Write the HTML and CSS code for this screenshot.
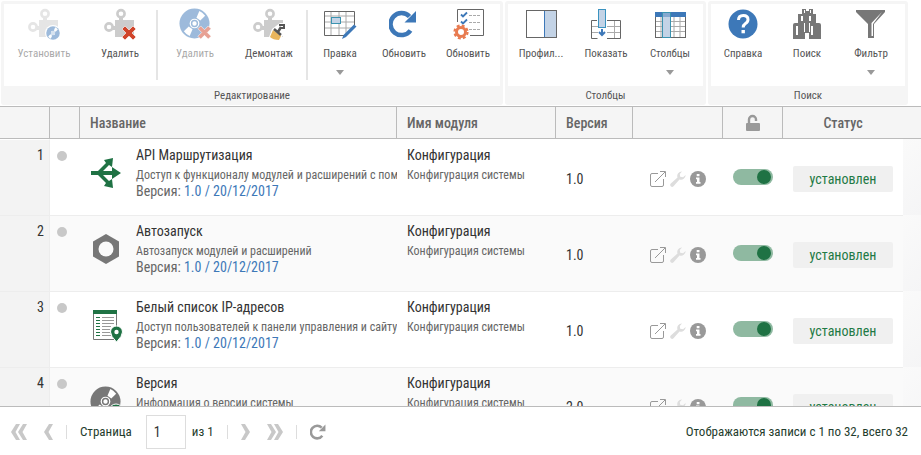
FILE: index.html
```html
<!DOCTYPE html>
<html lang="ru">
<head>
<meta charset="utf-8">
<title>Модули</title>
<link rel="stylesheet" href="styles.css">
</head>
<body>
<svg class="sprite" aria-hidden="true">
  <symbol id="puzzle" viewBox="0 0 32 32">
    <path d="M11 12h19v17H11v-7H8v-4h3z" fill="currentColor"/>
    <path d="M15 9h4v4h-4z" fill="currentColor"/>
    <circle cx="17" cy="5.700" r="3.600" fill="none" stroke="currentColor" stroke-width="2.600"/>
    <circle cx="5" cy="19" r="3.600" fill="none" stroke="currentColor" stroke-width="2.600"/>
  </symbol>
  <symbol id="cross" viewBox="0 0 16 16">
    <path d="M1 4l3-3 4 4 4-4 3 3-4 4 4 4-3 3-4-4-4 4-3-3 4-4z" fill="#d0452b" stroke="#fff" stroke-width=".6"/>
  </symbol>
  <symbol id="disc" viewBox="0 0 32 32">
    <circle cx="16" cy="16" r="15.500" fill="currentColor"/>
    <path d="M18 10l3-7q3 1 6 5l-5 5zM14 22l-3 7q-3-1-6-5l5-5z" fill="#fff"/>
    <circle cx="16" cy="16" r="5" fill="#fff"/>
    <circle cx="16" cy="16" r="3" fill="none" stroke="currentColor" stroke-width="1.500"/>
  </symbol>
  <symbol id="open" viewBox="0 0 16 16">
    <path d="M8 2.500H2Q.5 2.500.5 4v10q0 1.500 1.500 1.500h10q1.500 0 1.500-1.500V8M5 11L15 1M10 .5h5.500V6" fill="none" stroke="#999"/>
  </symbol>
  <symbol id="wrench" viewBox="0 0 16 16">
    <path d="M15.600 4A4.600 4.600 0 0 1 9.500 8.500L3.500 15.200A1.900 1.900 0 0 1 .8 12.500L7.500 6.500A4.600 4.600 0 0 1 12 .4L9.800 2.900l.4 2.900 2.900.4z" fill="#ddd"/>
  </symbol>
  <symbol id="info" viewBox="0 0 16 16">
    <circle cx="8" cy="8" r="8" fill="#999"/>
    <path d="M6.700 3h2.800v2.300H6.700zM6 6.500h3.500v4.500h1v1.800H6V11h1V8.200H6z" fill="#fff"/>
  </symbol>
  <symbol id="reload" viewBox="0 0 28 28">
    <path d="M21.500 20.500A11 11 0 1 1 20.500 6.500" fill="none" stroke="currentColor" stroke-width="4.500"/>
    <path d="M27 1v11.500H15.500z" fill="currentColor"/>
  </symbol>
  <symbol id="chevron" viewBox="0 0 9 16">
    <path d="M5 0h4L4.500 8 9 16H5L0 8z" fill="#c8c8c8"/>
  </symbol>
</svg>

<nav class="ribbon">
  <section class="group group-edit">
    <div class="tools">
      <button class="tool tool-wide" disabled><svg class="icon" viewBox="0 0 32 32"><use href="#puzzle" class="puzzle" width="32" height="32"/><circle cx="25" cy="25" r="8" fill="#fff"/><use href="#disc" class="blue" x="18" y="18" width="14" height="14"/></svg><span>Установить</span></button>
      <button class="tool tool-mid"><svg class="icon" viewBox="0 0 32 32"><use href="#puzzle" class="puzzle" width="32" height="32"/><use href="#cross" x="17" y="17" width="16" height="16"/></svg><span>Удалить</span></button>
      <i class="divider"></i>
      <button class="tool tool-broad" disabled><svg class="icon" viewBox="0 0 32 32"><use href="#disc" class="blue" width="31" height="31"/><use href="#cross" x="18" y="17" width="15" height="15"/></svg><span>Удалить</span></button>
      <button class="tool tool-broad"><svg class="icon" viewBox="0 0 32 32"><use href="#puzzle" class="puzzle" width="32" height="32"/><path d="M19 21l8-6h6v8l-6 9H15z" fill="#fff"/><path d="M20 22l8 6-2 4q-6 0-9-3z" fill="#e9b55c"/><path d="M21 21l7 6M25 24l3-5" stroke="#555" stroke-width="2.500"/><path d="M26 17h5v3h-3" fill="none" stroke="#555" stroke-width="2"/></svg><span>Демонтаж</span></button>
      <i class="divider"></i>
      <button class="tool"><svg class="icon" viewBox="0 0 32 32"><path d="M1 8h30M1 14h30M1 20h26M7 3v24M15 3v24M22 3v22" stroke="#aaa"/><path d="M20 27.500H.5v-24h30V17" fill="none" stroke="#666"/><rect x="7.500" y="9.500" width="9" height="6" fill="#c3d3e6" stroke="#3b93b0"/><path d="M18 31l1.500-4L30 16.500l2.500 2L22 29z" fill="#3d78b8"/></svg><span>Правка</span><b class="caret"></b></button>
      <button class="tool"><svg class="icon" viewBox="0 0 32 32"><use href="#reload" class="blue-dark" x="1" y="2" width="28" height="28"/></svg><span>Обновить</span></button>
      <button class="tool"><svg class="icon" viewBox="0 0 32 32"><path d="M5.500 14V1.500h26v26H18" fill="none" stroke="#666"/><path d="M17 7.500h12M17 14.500h12M17 21.500h12" stroke="#aaa" stroke-dasharray="3 1"/><path d="M9 6.500l2 2 4-4M9 13.500l2 2 4-4" fill="none" stroke="#3d78b8" stroke-width="1.800"/><circle cx="9" cy="24" r="5.600" fill="#fff"/><circle cx="9" cy="24" r="4.500" fill="none" stroke="#e87b50" stroke-width="3"/><circle cx="9" cy="24" r="6.500" fill="none" stroke="#e87b50" stroke-width="2.200" stroke-dasharray="2.900 2.200"/></svg><span>Обновить</span></button>
    </div>
    <h2>Редактирование</h2>
  </section>
  <section class="group group-columns">
    <div class="tools">
      <button class="tool tool-profile"><svg class="icon" viewBox="0 0 32 32"><rect x="20" y="3" width="11" height="27" fill="#c3d3e6"/><path d="M19.500 2v28" stroke="#3d78b8"/><rect x="1.500" y="2.500" width="30" height="27" fill="none" stroke="#666"/></svg><span>Профил...</span></button>
      <button class="tool"><svg class="icon" viewBox="0 0 32 32"><path d="M1 18.500h7M1 24.500h7M17 18.500h14M17 24.500h14M24.500 13v17" stroke="#aaa"/><path d="M7 12.500H1.500v18h6M17 12.500h13.500v18H17" fill="none" stroke="#666"/><rect x="8.500" y="1.500" width="7" height="18" fill="#c3d3e6" stroke="#3b93c0"/><path d="M12 21v6M9 24l3 3 3-3" fill="none" stroke="#3d78b8" stroke-width="2"/></svg><span>Показать</span></button>
      <button class="tool"><svg class="icon" viewBox="0 0 32 32"><path d="M1 13.500h30M1 18.500h30M1 23.500h30M7 8v21M20 8v21M26 8v21" stroke="#aaa"/><rect x="1.500" y="4.500" width="30" height="25" fill="none" stroke="#666"/><path d="M1 4h31v5H1z" fill="#3d78b8"/><rect x="8.500" y="4.500" width="8" height="25" fill="#c3d3e6" stroke="#3b93b0"/><path d="M9 5h7v4H9z" fill="#85a9d0"/></svg><span>Столбцы</span><b class="caret"></b></button>
    </div>
    <h2>Столбцы</h2>
  </section>
  <section class="group group-search">
    <div class="tools">
      <button class="tool"><svg class="icon" viewBox="0 0 32 32"><circle cx="16" cy="16" r="14.500" fill="#3d78b8"/><path d="M11.500 12q0-4.500 4.800-4.500 4.700 0 4.700 4 0 2.500-2.500 4-2.300 1.500-2.300 4" fill="none" stroke="#fff" stroke-width="3"/><path d="M14.500 22h3.400v3.300h-3.400z" fill="#fff"/></svg><span>Справка</span></button>
      <button class="tool"><svg class="icon" viewBox="0 0 32 32"><path d="M11 1h4v2h3V1h4v5h3v9h3q2 0 2 2v14H18v-6h-4v6H2V17q0-2 2-2h3V6h4z" fill="#777"/><path d="M5 18h2v9H5zM20 18h2v9h-2zM10 8h2v5h-2zM18 8h2v5h-2zM13 2h1v3h-1zM19 2h1v3h-1zM13 15h1v9h-1zM18 15h1v9h-1z" fill="#fff"/></svg><span>Поиск</span></button>
      <button class="tool"><svg class="icon" viewBox="0 0 32 32"><path d="M1 2h29v2L19 16v14h-6V16L1 4z" fill="#777"/><path d="M27 4L16.500 15v13H18V16z" fill="#fff"/></svg><span>Фильтр</span><b class="caret"></b></button>
    </div>
    <h2>Поиск</h2>
  </section>
</nav>

<main class="grid">
  <table>
    <colgroup><col class="c-num"><col class="c-dot"><col><col class="c-module"><col class="c-version"><col class="c-actions"><col class="c-lock"><col class="c-status"><col class="c-rest"></colgroup>
    <thead>
      <tr><th></th><th></th><th>Название</th><th>Имя модуля</th><th>Версия</th><th></th>
        <th class="center"><svg class="lock" viewBox="0 0 16 16"><path d="M4 9V4.500a3.500 3.500 0 0 1 7 0V6" fill="none" stroke="#999" stroke-width="2.400"/><rect x="1" y="8" width="14" height="8" rx="1" fill="#999"/></svg></th>
        <th class="center open-end">Статус</th><th></th></tr>
    </thead>
    <tbody>
      <tr>
        <td class="num">1</td><td class="state"><i class="dot"></i></td>
        <td class="name"><div class="module"><svg class="glyph" viewBox="0 0 30 30"><path d="M0 13h7L15 5l-2-3L22 0l-1 9-3-2-6 6h9V9l9 6-9 6v-4h-9l6 6 3-2 1 9-9-2 2-3-8-8H0z" fill="#1f7244"/></svg><div class="info"><strong>API Маршрутизация</strong><p>Доступ к функционалу модулей и расширений с пом</p><span>Версия: <a href="#v1">1.0 / 20/12/2017</a></span></div></div></td>
        <td class="package"><strong>Конфигурация</strong><p>Конфигурация системы</p></td>
        <td class="version">1.0</td>
        <td class="actions"><div class="links"><a href="#open1" aria-label="Открыть"><svg viewBox="0 0 16 16"><use href="#open"/></svg></a><a href="#set1" aria-label="Настройка"><svg viewBox="0 0 16 16"><use href="#wrench"/></svg></a><a href="#info1" aria-label="Информация"><svg viewBox="0 0 16 16"><use href="#info"/></svg></a></div></td>
        <td class="switch"><input type="checkbox" aria-label="Доступен" checked></td>
        <td class="status"><span>установлен</span></td><td class="rest"></td>
      </tr>
      <tr>
        <td class="num">2</td><td class="state"><i class="dot"></i></td>
        <td class="name"><div class="module"><svg class="glyph" viewBox="0 0 30 30"><path d="M15 0l13 7.500v15L15 30 2 22.500v-15z" fill="#777"/><circle cx="15" cy="15" r="7.500" fill="#fafafa"/></svg><div class="info"><strong>Автозапуск</strong><p>Автозапуск модулей и расширений</p><span>Версия: <a href="#v2">1.0 / 20/12/2017</a></span></div></div></td>
        <td class="package"><strong>Конфигурация</strong><p>Конфигурация системы</p></td>
        <td class="version">1.0</td>
        <td class="actions"><div class="links"><a href="#open2" aria-label="Открыть"><svg viewBox="0 0 16 16"><use href="#open"/></svg></a><a href="#set2" aria-label="Настройка"><svg viewBox="0 0 16 16"><use href="#wrench"/></svg></a><a href="#info2" aria-label="Информация"><svg viewBox="0 0 16 16"><use href="#info"/></svg></a></div></td>
        <td class="switch"><input type="checkbox" aria-label="Доступен" checked></td>
        <td class="status"><span>установлен</span></td><td class="rest"></td>
      </tr>
      <tr>
        <td class="num">3</td><td class="state"><i class="dot"></i></td>
        <td class="name"><div class="module"><svg class="glyph" viewBox="0 0 30 30"><path d="M2.500 1v28.500h23V1" fill="#fff" stroke="#777"/><path d="M2 0h24v4H2z" fill="#1f7244"/><path d="M5 7.500h4M5 10.500h4M5 13.500h4M5 16.500h4M5 19.500h4M5 22.500h4M5 25.500h4" stroke="#1f7244"/><path d="M11 7.500h12M11 10.500h12M11 13.500h12M11 16.500h9M11 19.500h8M11 22.500h8M11 25.500h9" stroke="#999"/><path d="M25.500 32q-6-6-6-10a5.800 5.800 0 0 1 12 0q0 4-6 10z" fill="#1f7244" stroke="#fff"/><circle cx="25.500" cy="22" r="2.200" fill="#fff"/></svg><div class="info"><strong>Белый список IP-адресов</strong><p>Доступ пользователей к панели управления и сайту</p><span>Версия: <a href="#v3">1.0 / 20/12/2017</a></span></div></div></td>
        <td class="package"><strong>Конфигурация</strong><p>Конфигурация системы</p></td>
        <td class="version">1.0</td>
        <td class="actions"><div class="links"><a href="#open3" aria-label="Открыть"><svg viewBox="0 0 16 16"><use href="#open"/></svg></a><a href="#set3" aria-label="Настройка"><svg viewBox="0 0 16 16"><use href="#wrench"/></svg></a><a href="#info3" aria-label="Информация"><svg viewBox="0 0 16 16"><use href="#info"/></svg></a></div></td>
        <td class="switch"><input type="checkbox" aria-label="Доступен" checked></td>
        <td class="status"><span>установлен</span></td><td class="rest"></td>
      </tr>
      <tr>
        <td class="num">4</td><td class="state"><i class="dot"></i></td>
        <td class="name"><div class="module"><svg class="glyph grey" viewBox="0 0 30 30"><use href="#disc" x="-1" y="0" width="31" height="31"/><circle cx="25" cy="25" r="7" fill="#1f7244" stroke="#fff"/></svg><div class="info"><strong>Версия</strong><p>Информация о версии системы</p></div></div></td>
        <td class="package"><strong>Конфигурация</strong><p>Конфигурация системы</p></td>
        <td class="version">2.0</td>
        <td class="actions"><div class="links"><a href="#open4" aria-label="Открыть"><svg viewBox="0 0 16 16"><use href="#open"/></svg></a><a href="#set4" aria-label="Настройка"><svg viewBox="0 0 16 16"><use href="#wrench"/></svg></a><a href="#info4" aria-label="Информация"><svg viewBox="0 0 16 16"><use href="#info"/></svg></a></div></td>
        <td class="switch"><input type="checkbox" aria-label="Доступен" checked></td>
        <td class="status"><span>установлен</span></td><td class="rest"></td>
      </tr>
    </tbody>
  </table>
</main>

<footer class="pager">
  <button aria-label="Первая страница"><svg class="double" viewBox="0 0 16 16"><use href="#chevron" width="9" height="16"/><use href="#chevron" x="7" width="9" height="16"/></svg></button>
  <button aria-label="Предыдущая страница"><svg class="single" viewBox="0 0 9 16"><use href="#chevron"/></svg></button>
  <i class="bar"></i>
  <label for="page">Страница</label>
  <input id="page" type="text" value="1">
  <span class="total">из 1</span>
  <i class="bar"></i>
  <button aria-label="Следующая страница"><svg class="single flip" viewBox="0 0 9 16"><use href="#chevron"/></svg></button>
  <button aria-label="Последняя страница"><svg class="double flip" viewBox="0 0 16 16"><use href="#chevron" width="9" height="16"/><use href="#chevron" x="7" width="9" height="16"/></svg></button>
  <i class="bar"></i>
  <button class="refresh" aria-label="Обновить"><svg class="double" viewBox="0 0 28 28"><use href="#reload"/></svg></button>
  <span class="summary">Отображаются записи с 1 по 32, всего 32</span>
</footer>
</body>
</html>
```
FILE: styles.css
```css
* { box-sizing: border-box; }
body {
  margin: 0;
  height: 100vh;
  display: flex;
  flex-direction: column;
  overflow: hidden;
  background: #fff;
  color: #333;
  font: 14px/16px "Roboto Condensed", "Liberation Sans Narrow", Roboto, sans-serif;
}
.sprite { display: none; }
svg { display: block; overflow: visible; }
button { border: 0; padding: 0; background: none; font: inherit; color: inherit; }
a { color: #3d78b8; text-decoration: none; }

.ribbon { display: flex; gap: 2px; padding: 1px 0 1px 1px; }
.group { padding: 3px 3px 0; background: #f5f5f5; border-radius: 3px; }
.tools { display: flex; height: 82px; background: #fff; }
.group-edit { flex: 0 0 502px; }
.group-columns { flex: 0 0 201px; }
.group-search { flex: 0 0 200px; }
.group h2 { margin: 0; font-size: 11px; font-weight: 400; line-height: 19px; text-align: center; color: #555; }
.tool {
  flex: 0 0 64px;
  display: flex;
  flex-direction: column;
  align-items: center;
  padding-top: 4px;
  font-size: 11px;
  color: #555;
}
.tool span { margin-top: 6px; white-space: nowrap; }
.tool:disabled { opacity: .5; }
.tool-wide { flex-basis: 80px; }
.tool-mid { flex-basis: 72px; }
.tool-broad { flex-basis: 74px; }
.tool-profile { flex-basis: 66px; }
.icon { width: 32px; height: 32px; }
.puzzle { color: #ccc; }
.blue, .blue-dark { color: #3d78b8; }
.divider { flex: 0 0 2px; height: 70px; margin-top: 6px; background: #e5e5e5; }
.caret { margin-top: 8px; border: 4px solid transparent; border-top: 5px solid #999; border-bottom: 0; }

.grid { flex: 1; min-height: 0; overflow: hidden; border-top: 1px solid #bbb; }
table { width: 100%; table-layout: fixed; border-collapse: separate; border-spacing: 0; }
.c-num { width: 50px; }
.c-dot { width: 30px; }
.c-module { width: 159px; }
.c-version { width: 77px; }
.c-actions { width: 90px; }
.c-lock { width: 60px; }
.c-status { width: 120px; }
.c-rest { width: 18px; }
th {
  height: 32px;
  padding: 0 10px;
  background: #f5f5f5;
  border-right: 1px solid #bbb;
  border-bottom: 1px solid #bbb;
  font-size: 14px;
  font-weight: 500;
  text-align: left;
  color: #666;
}
th.center { text-align: center; }
th.open-end, th:last-child { border-right: 0; }
.lock { width: 16px; height: 16px; margin: 0 auto; }
td { height: 76px; padding: 0; border-top: 1px solid #ededed; vertical-align: top; }
tbody tr:first-child td { border-top-color: #fff; }
tbody tr:nth-child(even) td { background: #fafafa; }
tbody td.num, tbody tr:nth-child(even) td.num {
  padding: 7px 5px 0 0;
  background: #f3f3f3;
  border-right: 1px solid #ededed;
  text-align: right;
}
.dot { display: block; width: 10px; height: 10px; margin: 11px 7px 0; border-radius: 50%; background: #c8c8c8; }
td p { margin: 2px 0 0; font-size: 12px; line-height: 16px; color: #666; white-space: nowrap; }
td strong { display: block; font-weight: 400; line-height: 20px; white-space: nowrap; }
.module { display: flex; gap: 15px; padding: 5px 0 0 11px; overflow: hidden; }
.glyph { flex: 0 0 30px; height: 30px; margin-top: 13px; }
.grey { color: #777; }
.info { min-width: 0; color: #666; }
.info strong { color: #333; }
td.package { padding: 5px 0 0 10px; }
td.version { padding: 2px 0 0 10px; vertical-align: middle; }
td.actions { padding: 2px 0 0 17px; vertical-align: middle; }
.links { display: flex; gap: 4px; }
.links svg { width: 16px; height: 16px; }
td.switch { padding: 0 0 2px 10px; vertical-align: middle; }
.switch input {
  appearance: none;
  display: flex;
  justify-content: flex-end;
  width: 40px;
  height: 16px;
  margin: 0;
  padding: 1px 2px 1px 0;
  border-radius: 8px;
  background: #8fb9a1;
}
.switch input::before { content: ""; width: 14px; height: 14px; border-radius: 50%; background: #1f7244; }
td.status { padding: 2px 10px 0; vertical-align: middle; }
.status span { display: block; border-radius: 2px; background: #f0f0f0; color: #1f7a45; line-height: 26px; text-align: center; }
tbody td.rest, tbody tr:nth-child(even) td.rest { border: 0; background: linear-gradient(135deg, #fafafa, #f5f5f6); }

.pager { display: flex; align-items: center; height: 49px; padding: 1px 13px 0 11px; border-top: 1px solid #bbb; font-size: 13px; color: #1f3d2e; }
.double { width: 16px; height: 16px; }
.single { width: 9px; height: 16px; }
.flip { transform: scaleX(-1); }
.pager button + button { margin-left: 17px; }
.bar { width: 1px; height: 14px; margin: 0 13px; background: #ddd; }
.pager input { width: 40px; height: 34px; margin: 0 6px 0 14px; padding: 0 7px; border: 1px solid #ddd; font: inherit; font-size: 14px; color: #333; }
.refresh { color: #999; }
.summary { margin-left: auto; }
```
